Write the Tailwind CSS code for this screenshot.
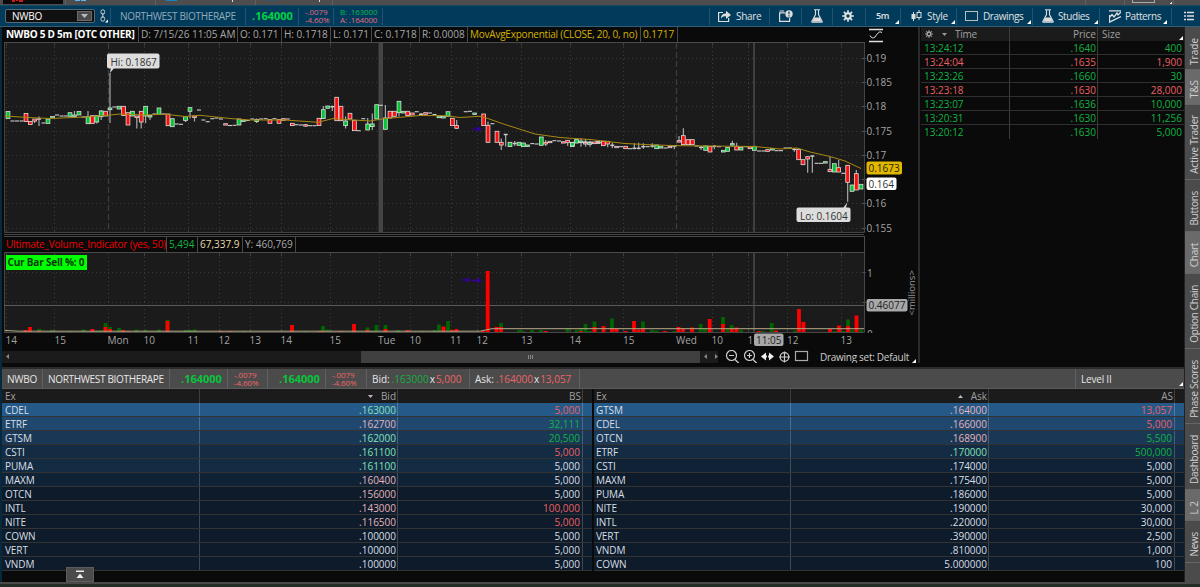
<!DOCTYPE html>
<html lang="en">
<head>
    <meta charset="UTF-8">
    <meta name="viewport" content="width=device-width, initial-scale=1.0">
    <title>NWBO Chart</title>
    <script src="https://cdn.jsdelivr.net/npm/@tailwindcss/browser@4"></script>
</head>
<body class="bg-[#0a0a0a]">
<div class="w-[1200px] h-[587px] flex flex-col overflow-hidden bg-[#0a0a0a] font-['Open_Sans',sans-serif] text-[10px] leading-[14px] whitespace-nowrap text-[#a8a8a8]">

    <!-- Tab strip, cut off at the top -->
    <svg class="block h-[6px] w-[1200px] shrink-0" viewBox="0 0 1200 6" shape-rendering="crispEdges">
        <rect width="1200" height="6" fill="#4d4d4d"/>
        <rect x="3" width="60" height="4" fill="#0a0a0a"/>
        <path d="M12 0h3v2h-3zM16 0h2v1h-2zM19 0h4v2h-4z" fill="#d81818"/>
        <path d="M75 0h5v1h-5zM81 0h5v1h-5z" fill="#58b8ee"/>
        <rect x="166" width="11" height="1" fill="#1687c4"/>
        <path d="M267 0h4v1h-4zM272 0h3v1h-3z" fill="#2d5a70"/>
        <path d="M232 0h1v2h-1zM319 0h1v2h-1z" fill="#ddd"/>
        <path d="M65 0h1v5h-1zM155 0h1v5h-1zM255 0h1v5h-1zM332 0h1v5h-1zM1085 0h1v6h-1zM1124 0h1v6h-1zM1173 0h1v6h-1z" fill="#606060"/>
        <path d="M1132 0v2.500h22V0" fill="none" stroke="#aaa"/>
        <path d="M1172 1v3h-3z" fill="#ddd"/>
        <rect y="5" width="1200" height="1" fill="#174a66"/>
    </svg>

    <!-- Toolbar -->
    <div class="flex h-[21px] shrink-0 items-center bg-[#003b5c] border-b border-[#345e75] text-[#e0e0e0]">
        <div class="flex items-center justify-between ml-[5px] w-[90px] h-[14px] pl-[6px] pr-[2px] bg-[#101010] border border-[#566a75] rounded-[2px] text-[10px] leading-3 text-white">
            <span class="tracking-[-0.2px]">NWBO</span>
            <span class="flex items-center justify-center w-[15px] h-[10px] bg-[#4a4a4a] border border-[#6a6a6a]"><svg class="w-[7px] h-1" viewBox="0 0 7 4"><path d="M0 0h7L3.500 4z" fill="#bbb"/></svg></span>
        </div>
        <svg class="w-[10px] h-[14px] ml-[4px]" viewBox="0 0 10 14" fill="none" stroke="#ccc"><rect x="2" y=".8" width="3.600" height="4.400" rx="1.600"/><rect x="2" y="7.800" width="3.600" height="4.400" rx="1.600"/><path d="M3.800 4v5"/><path d="M9 10.500v3H6z" fill="#fff" stroke="none"/></svg>
        <div class="flex items-center w-[135px] h-[17px] ml-[1px] pl-[9px] border-l border-[#22546f] tracking-[-0.33px] text-[#93a9b6]"><span>NORTHWEST BIOTHERAPE</span></div>
        <div class="flex items-center w-[53px] h-[17px] pl-[6px] border-l border-[#22546f] font-bold text-[11px] text-[#00d244]">.164000</div>
        <div class="flex flex-col justify-center w-[35px] h-[17px] pl-[6px] border-l border-[#22546f] text-[8px] leading-[8px] tracking-[-0.1px] text-[#e8687a]"><span>-.0079</span><span>-4.60%</span></div>
        <div class="flex flex-col justify-center w-[49px] h-[17px] pl-[6px] border-l border-[#22546f] text-[8px] leading-[8px] tracking-[-0.15px]"><span class="text-[#10b850]">B: .163000</span><span class="text-[#e8687a]">A: .164000</span></div>
        <div class="w-[327px] h-[17px] border-l border-[#22546f]"></div>
        <div class="flex items-center w-[60px] h-[17px] pl-[8px] gap-[5px] border-l border-[#22546f]">
            <svg class="w-[13px] h-[12px]" viewBox="0 0 13 12"><path d="M5 2.500H.6v9h10V8" fill="none" stroke="#ddd" stroke-width="1.200"/><path d="M3 8.500C3 4.500 5.500 3.500 8 3.500V.8L13 5 8 9V6.300C6 6.300 4.500 6.500 3 8.500z" fill="#ddd"/></svg><span class="tracking-[-0.3px]">Share</span>
        </div>
        <div class="flex items-center w-[32px] h-[17px] pl-[9px] border-l border-[#22546f]">
            <svg class="w-[14px] h-[12px]" viewBox="0 0 14 12"><path d="M6 2.800H.6v8.500h10V8M.6 1h4.500" fill="none" stroke="#ddd" stroke-width="1.200"/><circle cx="10" cy="3.900" r="3.700" fill="#ddd"/><path d="M10 1.500v2.800M10 5.300v1.200" stroke="#003b5c" stroke-width="1.200"/></svg>
        </div>
        <div class="flex items-center w-[31px] h-[17px] pl-[9px] border-l border-[#22546f]">
            <svg class="w-[12px] h-[14px]" viewBox="0 0 12 14"><path d="M3 .7h6M4.500 1v4.500L.8 12.500q-.2.800.6.800h9.200q.8 0 .6-.8L7.500 5.500V1" fill="none" stroke="#ddd" stroke-width="1.100"/><path d="M3.300 8.500h5.400l2 4.200H1.300z" fill="#ddd"/></svg>
        </div>
        <div class="flex items-center w-[33px] h-[17px] pl-[9px] border-l border-[#22546f]">
            <svg class="w-[12px] h-[12px]" viewBox="-6 -6 12 12" fill="none" stroke="#e6e6e6"><circle r="2.700" stroke-width="2"/><path d="M0-5.800V-3M0 3v2.800M-5.800 0H-3M3 0h2.800M-4.100-4.100l2 2M2.100 2.100l2 2M-4.100 4.100l2-2M2.100-2.100l2-2" stroke-width="1.600"/></svg>
        </div>
        <div class="flex items-center w-[35px] h-[17px] pl-[10px] text-[9px] font-semibold tracking-[-0.3px] border-l border-[#22546f]"><span class="w-[19px]">5m</span><svg class="w-[4px] h-[4px] mt-[11px]" viewBox="0 0 4 4"><path d="M4 0v4H0z" fill="#fff"/></svg></div>
        <div class="flex items-center w-[56px] h-[17px] pl-[10px] border-l border-[#22546f]">
            <svg class="w-[11px] h-[12px] mr-[5px]" viewBox="0 0 11 12"><path d="M2.500 2v9M8 0v10" stroke="#ddd"/><rect x=".5" y="4" width="4" height="5" fill="#ddd"/><rect x="6" y="2.500" width="4" height="5" fill="#003b5c" stroke="#ddd"/></svg>
            <span class="w-[24px] tracking-[-0.3px]">Style</span><svg class="w-[4px] h-[4px] mt-[11px]" viewBox="0 0 4 4"><path d="M4 0v4H0z" fill="#fff"/></svg>
        </div>
        <div class="flex items-center w-[76px] h-[17px] pl-[8px] border-l border-[#22546f]">
            <svg class="w-[13px] h-[11px] mr-[5px]" viewBox="0 0 13 11"><rect x=".5" y=".5" width="12" height="9" fill="none" stroke="#bbb"/></svg>
            <span class="w-[44px] tracking-[-0.4px]">Drawings</span><svg class="w-[4px] h-[4px] mt-[11px]" viewBox="0 0 4 4"><path d="M4 0v4H0z" fill="#fff"/></svg>
        </div>
        <div class="flex items-center w-[67px] h-[17px] pl-[9px] border-l border-[#22546f]">
            <svg class="w-[12px] h-[14px] mr-[4px]" viewBox="0 0 12 14"><path d="M3 .7h6M4.500 1v4.500L.8 12.500q-.2.800.6.800h9.200q.8 0 .6-.8L7.500 5.500V1" fill="none" stroke="#ddd" stroke-width="1.100"/><path d="M3.300 8.500h5.400l2 4.200H1.300z" fill="#ddd"/></svg>
            <span class="w-[36px] tracking-[-0.4px]">Studies</span><svg class="w-[4px] h-[4px] mt-[11px]" viewBox="0 0 4 4"><path d="M4 0v4H0z" fill="#fff"/></svg>
        </div>
        <div class="flex items-center w-[72px] h-[17px] pl-[9px] border-l border-[#22546f]">
            <svg class="w-[12px] h-[13px] mr-[4px]" viewBox="0 0 12 13" fill="none" stroke="#ddd"><path d="M0 .8h12M0 12.300L12 6.500M0 8l3-3.500L5 7l3-4 1 2 3-3M.5 5v8" stroke-width="1.300"/></svg>
            <span class="w-[38px] tracking-[-0.4px]">Patterns</span><svg class="w-[4px] h-[4px] mt-[11px]" viewBox="0 0 4 4"><path d="M4 0v4H0z" fill="#fff"/></svg>
        </div>
        <div class="flex items-center w-[29px] h-[17px] pl-[12px] border-l border-[#22546f]">
            <svg class="w-[11px] h-[10px]" viewBox="0 0 11 10" stroke="#ddd"><path d="M0 1.500h2M3 1.500h7M0 5h2M3 5h7M0 8.500h2M3 8.500h7" stroke-width="1.400"/></svg>
        </div>
    </div>

    <div class="flex h-[555px] shrink-0">
        <div class="w-[2px] bg-[#06293c]"></div>
        <div class="flex flex-col w-[1182px]">
            <div class="flex h-[336px]">

                <!-- Chart column -->
                <div class="flex flex-col w-[916px]">
                    <div class="flex h-[16px]">
                        <div class="flex w-[861px] ml-[2px] border-b border-[#4a4a4a] leading-[15px]">
                            <div class="w-[135px] pl-[2px] border-r border-[#4a4a4a] font-bold tracking-[-0.26px] text-white">NWBO 5 D 5m [OTC OTHER]</div>
                            <div class="w-[99px] pl-[2px] border-r border-[#4a4a4a]">D: 7/15/26 11:05 AM</div>
                            <div class="w-[44px] pl-[2px] border-r border-[#4a4a4a]">O: 0.171</div>
                            <div class="w-[49px] pl-[2px] border-r border-[#4a4a4a]">H: 0.1718</div>
                            <div class="w-[41px] pl-[2px] border-r border-[#4a4a4a]">L: 0.171</div>
                            <div class="w-[48px] pl-[2px] border-r border-[#4a4a4a]">C: 0.1718</div>
                            <div class="w-[48px] pl-[2px] border-r border-[#4a4a4a]">R: 0.0008</div>
                            <div class="w-[173px] pl-[2px] border-r border-[#4a4a4a] tracking-[-0.23px] text-[#d4b200]">MovAvgExponential (CLOSE, 20, 0, no)</div>
                            <div class="w-[37px] pl-[2px] border-r border-[#4a4a4a] text-[#d4b200]">0.1717</div>
                        </div>
                        <svg class="w-[16px] h-[16px] ml-[3px]" viewBox="0 0 16 16" fill="none" stroke="#e0e0e0"><path d="M1 2.500h14M1 14.500h14" stroke-width="1.500"/><path d="M2 8.500q2 4 5 1.500l2.500-3.500q2.500-3 4.500-1"/></svg>
                    </div>
                    <svg id="price" class="block w-[916px] h-[193px] shrink-0" viewBox="2 43 916 193" font-size="10">
                        <rect x="4" y="43" width="860" height="189" fill="#1b1b1b"/>
                    </svg>
                    <div class="flex h-[17px]">
                        <div class="flex w-[861px] ml-[2px] border-y border-r border-[#4a4a4a] leading-[15px]">
                            <div class="w-[163px] pl-[2px] border-r border-[#4a4a4a] tracking-[-0.18px] text-[#ee0000]">Ultimate_Volume_Indicator (yes, 50)</div>
                            <div class="w-[31px] pl-[2px] border-r border-[#4a4a4a] text-[#12b444]">5,494</div>
                            <div class="w-[45px] pl-[2px] border-r border-[#4a4a4a] text-[#e8dcac]">67,337.9</div>
                            <div class="w-[53px] pl-[2px] border-r border-[#4a4a4a]">Y: 460,769</div>
                        </div>
                    </div>
                    <svg id="volume" class="block w-[916px] h-[97px] shrink-0" viewBox="2 253 916 97" font-size="10">
                        <rect x="4" y="253" width="860" height="79" fill="#1b1b1b"/>
                    </svg>
                    <div class="flex items-center h-[13px] w-[916px]">
                        <div class="flex items-center w-[716px] h-[12px] pl-[4px] bg-[#1b1b1b]">
                            <svg class="w-[3px] h-[5px] mr-[352px]" viewBox="0 0 3 5"><path d="M3 0v5L0 2.500z" fill="#888"/></svg>
                            <div class="flex items-center justify-center gap-px w-[340px] h-[12px] bg-[#404040]"><i class="w-px h-1 bg-[#888]"></i><i class="w-px h-1 bg-[#888]"></i><i class="w-px h-1 bg-[#888]"></i></div>
                            <svg class="w-[14px] h-[5px] ml-[4px]" viewBox="0 0 14 5"><path d="M3 0v5L0 2.500zM11 0v5l3-2.500z" fill="#888"/></svg>
                        </div>
                        <svg class="w-[84px] h-[14px] ml-[7px] shrink-0" viewBox="725 349 84 14" fill="none" stroke="#ccc" stroke-width="1.200"><circle cx="731.500" cy="354.500" r="5"/><path d="M729 354.500h5M735 358.500l4 4"/><circle cx="749.500" cy="354.500" r="5"/><path d="M747 354.500h5M749.500 352v5M753 358.500l4 4"/><path d="M761 355.500l5-4v3h3v-3l5 4-5 4v-3h-3v3z" fill="#eee" stroke="none"/><path d="M767.500 351v9" stroke="#0a0a0a"/><circle cx="784.500" cy="356" r="4.300"/><path d="M779 356h11M784.500 350.500v11"/><rect x="795.500" y="350.500" width="12" height="9" stroke="#aaa"/></svg>
                        <span class="ml-[11px] tracking-[-0.28px] text-[#ccc]">Drawing set: Default</span><svg class="w-[4px] h-[4px] ml-[3px] mt-[9px]" viewBox="0 0 4 4"><path d="M4 0v4H0z" fill="#fff"/></svg>
                    </div>
                </div>

                <!-- Time & sales -->
                <div class="w-[266px] border-l-2 border-[#2b2b2b] pl-px">
                    <div class="flex h-[14px] bg-[#1b1b1b] text-[#a0a0a0]">
                        <div class="flex items-center w-[89px] pl-[4px] border-r border-[#3c3c3c]">
                            <svg class="w-[8px] h-[8px]" viewBox="-6 -6 12 12" fill="none" stroke="#aaa"><circle r="2.700" stroke-width="1.800"/><path d="M0-5.800V-3M0 3v2.800M-5.800 0H-3M3 0h2.800M-4.100-4.100l2 2M2.100 2.100l2 2M-4.100 4.100l2-2M2.100-2.100l2-2" stroke-width="1.600"/></svg>
                            <svg class="w-[5px] h-[3px] ml-[9px] mr-[8px]" viewBox="0 0 5 3"><path d="M0 0h5L2.500 3z" fill="#999"/></svg><span class="tracking-[-0.3px]">Time</span>
                        </div>
                        <div class="w-[88px] pr-px text-right border-r border-[#3c3c3c]">Price</div>
                        <div class="flex flex-1 justify-between pl-[4px]">Size<svg class="w-[4px] h-[4px] mt-[9px] mr-px" viewBox="0 0 4 4"><path d="M4 0v4H0z" fill="#fff"/></svg></div>
                    </div>
                    <div id="sales"></div>
                </div>
            </div>
            <div class="h-[6px] bg-[#0a0a0a] border-b-2 border-[#2b2b2b]"></div>

            <!-- Quote bar -->
            <div class="flex h-[20px] items-center bg-[#4b4b4b] border-b border-[#5a5a5a] text-[#e6e6e6]">
                <div class="flex items-center w-[41px] h-[20px] pl-[5px] border-r border-[#606060] tracking-[-0.2px]">NWBO</div>
                <div class="flex items-center w-[127px] h-[20px] pl-[5px] border-r border-[#606060] tracking-[-0.33px]">NORTHWEST BIOTHERAPE</div>
                <div class="flex items-center w-[58px] h-[20px] pl-[11px] border-r border-[#606060] font-bold text-[11px] text-[#08c43c]">.164000</div>
                <div class="flex flex-col justify-center w-[40px] h-[20px] pl-[6px] border-r border-[#606060] text-[8px] leading-[8px] tracking-[-0.1px] text-[#ec6468]"><span>-.0079</span><span>-4.60%</span></div>
                <div class="flex items-center w-[58px] h-[20px] pl-[11px] border-r border-[#606060] font-bold text-[11px] text-[#08c43c]">.164000</div>
                <div class="flex flex-col justify-center w-[41px] h-[20px] pl-[6px] border-r border-[#606060] text-[8px] leading-[8px] tracking-[-0.1px] text-[#ec6468]"><span>-.0079</span><span>-4.60%</span></div>
                <div class="flex items-center gap-px w-[103px] h-[20px] pl-[5px] border-r border-[#606060]">Bid:<span class="ml-px text-[#12b040]">.163000</span>x<span class="text-[#ec6468]">5,000</span></div>
                <div class="flex items-center gap-px w-[110px] h-[20px] pl-[5px] border-r border-[#606060]">Ask:<span class="ml-px text-[#ec6468]">.164000</span>x<span class="text-[#ec6468]">13,057</span></div>
                <div class="w-[496px] h-[20px] border-r border-[#606060]"></div>
                <div class="flex flex-1 justify-between items-center h-[20px] pl-[5px] tracking-[-0.2px]">Level II<svg class="w-[4px] h-[4px] mt-[11px] mr-px" viewBox="0 0 4 4"><path d="M4 0v4H0z" fill="#fff"/></svg></div>
            </div>

            <!-- Level II book -->
            <div class="flex">
                <div class="w-[590px]">
                    <div class="flex h-[14px] bg-[#1b1b1b] text-[#a0a0a0]">
                        <div class="w-[198px] pl-[3px] border-r border-[#3c3c3c]">Ex</div>
                        <div class="flex items-center justify-end w-[198px] pr-px border-r border-[#3c3c3c]"><svg class="w-[5px] h-[3px] mr-[8px]" viewBox="0 0 5 3"><path d="M0 0h5L2.500 3z" fill="#bbb"/></svg>Bid</div>
                        <div class="w-[185px] pr-px text-right border-r border-[#3c3c3c]">BS</div>
                    </div>
                    <div id="bids"></div>
                </div>
                <div class="w-[592px] border-l-2 border-[#0a0a0a]">
                    <div class="flex h-[14px] bg-[#1b1b1b] text-[#a0a0a0]">
                        <div class="w-[197px] pl-[2px] border-r border-[#3c3c3c]">Ex</div>
                        <div class="flex items-center justify-end w-[198px] pr-px border-r border-[#3c3c3c]"><svg class="w-[5px] h-[3px] mr-[8px]" viewBox="0 0 5 3"><path d="M0 3h5L2.500 0z" fill="#bbb"/></svg>Ask</div>
                        <div class="w-[186px] pr-px text-right border-r border-[#3c3c3c]">AS</div>
                    </div>
                    <div id="asks"></div>
                </div>
            </div>
            <div class="flex items-end flex-1 pl-[64px]">
                <div class="flex items-center justify-center w-[28px] h-[15px] -mt-1 bg-[#4b4b4b] border border-[#5c5c5c] z-10"><svg class="w-[8px] h-[9px]" viewBox="0 0 8 9"><path d="M0 .5h8v1.500H0zM4 3.500L7.500 8h-7z" fill="#eee"/></svg></div>
            </div>
        </div>

        <!-- Gadget tabs -->
        <div class="flex flex-col w-[16px] border-l border-[#222] bg-[#4b4b4b] text-[#d0d0d0]">
            <div class="flex items-center justify-center h-[43px] border-b border-[#666] pt-[6px] pl-[2px]"><span class="[writing-mode:vertical-rl] rotate-180">Trade</span></div>
            <div class="flex items-center justify-center h-[35px] border-b border-[#666] pt-[5px] pl-[2px] bg-[#6a6a6a]"><span class="[writing-mode:vertical-rl] rotate-180">T&amp;S</span></div>
            <div class="flex items-center justify-center h-[75px] border-b border-[#666] pt-[5px] pl-[2px]"><span class="[writing-mode:vertical-rl] rotate-180 tracking-[-0.2px]">Active Trader</span></div>
            <div class="flex items-center justify-center h-[52px] border-b border-[#666] pt-[5px] pl-[2px]"><span class="[writing-mode:vertical-rl] rotate-180 tracking-[-0.3px]">Buttons</span></div>
            <div class="flex items-center justify-center h-[42px] border-b border-[#666] pt-[5px] pl-[2px] bg-[#6a6a6a]"><span class="[writing-mode:vertical-rl] rotate-180 tracking-[-0.3px]">Chart</span></div>
            <div class="flex items-center justify-center h-[75px] border-b border-[#666] pt-[5px] pl-[2px]"><span class="[writing-mode:vertical-rl] rotate-180 tracking-[-0.3px]">Option Chain</span></div>
            <div class="flex items-center justify-center h-[75px] border-b border-[#666] pt-[5px] pl-[2px]"><span class="[writing-mode:vertical-rl] rotate-180 tracking-[-0.3px]">Phase Scores</span></div>
            <div class="flex items-center justify-center h-[66px] border-b border-[#666] pt-[5px] pl-[2px]"><span class="[writing-mode:vertical-rl] rotate-180 tracking-[-0.3px]">Dashboard</span></div>
            <div class="flex items-center justify-center h-[31px] border-b border-[#666] pt-[5px] pl-[2px] bg-[#6a6a6a]"><span class="[writing-mode:vertical-rl] rotate-180">L 2</span></div>
            <div class="flex items-center justify-center h-[42px] border-b border-[#666] pt-[5px] pl-[2px]"><span class="[writing-mode:vertical-rl] rotate-180 tracking-[-0.3px]">News</span></div>
        </div>
    </div>
    <div class="flex-1 bg-[#252b25] border-t-2 border-[#4a4a4a]"></div>
</div>

<script>
    // Time & sales and order book rows
    const green = "text-[#12b444]", red = "text-[#ec6064]", white = "text-[#d8dee4]";
    const mint = "text-[#86e0b8]", pink = "text-[#e4b4ba]";

    const sales = [
        ["13:24:12", ".1640", "400", green], ["13:24:04", ".1635", "1,900", red],
        ["13:23:26", ".1660", "30", green], ["13:23:18", ".1630", "28,000", red],
        ["13:23:07", ".1636", "10,000", green], ["13:20:31", ".1630", "11,256", green],
        ["13:20:12", ".1630", "5,000", green]
    ];
    document.getElementById("sales").innerHTML = sales.map(([t, p, s, c], i) => `
        <div class="flex h-[14px] leading-[15px] ${i < 6 ? "border-b border-[#303030]" : ""} ${c}">
            <div class="w-[89px] pl-[3px] border-r border-[#3c3c3c]">${t}</div>
            <div class="w-[88px] pr-px text-right border-r border-[#3c3c3c]">${p}</div>
            <div class="flex-1 pr-[2px] text-right">${s}</div>
        </div>`).join("");

    const levels = ["bg-[#255a88]", "bg-[#20486f]", "bg-[#1a3855]", "bg-[#132b43]", "bg-[#102236]"];
    const book = (id, rows, first) => {
        document.getElementById(id).innerHTML = rows.map(([ex, price, size, pc, sc, lv]) => `
            <div class="flex h-[14px] leading-[14px] border-b border-[#333] ${levels[lv] || "bg-[#0d1b2a]"} ${white}">
                <div class="${first} border-r border-white/20 tracking-[-0.1px]">${ex}</div>
                <div class="w-[198px] pr-px text-right border-r border-white/20 ${pc}">${price}</div>
                <div class="${id === "bids" ? "w-[185px]" : "w-[186px]"} pr-[2px] text-right border-r border-white/20 ${sc}">${size}</div>
            </div>`).join("");
    };
    book("bids", [
        ["CDEL", ".163000", "5,000", mint, red, 0], ["ETRF", ".162700", "32,111", pink, green, 1],
        ["GTSM", ".162000", "20,500", mint, green, 2], ["CSTI", ".161100", "5,000", mint, red, 3],
        ["PUMA", ".161100", "5,000", mint, white, 3], ["MAXM", ".160400", "5,000", pink, white, 4],
        ["OTCN", ".156000", "5,000", pink, white, 5], ["INTL", ".143000", "100,000", pink, red, 5],
        ["NITE", ".116500", "5,000", pink, red, 5], ["COWN", ".100000", "5,000", white, white, 5],
        ["VERT", ".100000", "5,000", white, white, 5], ["VNDM", ".100000", "5,000", white, white, 5]
    ], "w-[198px] pl-[3px]");
    book("asks", [
        ["GTSM", ".164000", "13,057", pink, red, 0], ["CDEL", ".166000", "5,000", pink, red, 1],
        ["OTCN", ".168900", "5,500", pink, green, 2], ["ETRF", ".170000", "500,000", mint, green, 3],
        ["CSTI", ".174000", "5,000", white, white, 4], ["MAXM", ".175400", "5,000", white, white, 5],
        ["PUMA", ".186000", "5,000", white, white, 5], ["NITE", ".190000", "30,000", white, white, 5],
        ["INTL", ".220000", "30,000", white, white, 5], ["VERT", ".390000", "2,500", white, white, 5],
        ["VNDM", ".810000", "1,000", white, white, 5], ["COWN", "5.000000", "100", white, white, 5]
    ], "w-[197px] pl-[2px]");

    // Shared time grid
    const xs = [6, 54.5, 144, 188, 219, 250, 281, 330, 410, 451, 477, 521, 570, 623, 712, 748, 787, 841];
    const vline = (x, a, b, extra) => `<path d="M${Math.floor(x) + .5} ${a}V${b}" stroke="#3d3d3d" ${extra}/>`;
    const grid = (a, b) => xs.map(x => vline(x, a, b, 'stroke-dasharray="1 3"') + vline(x, a, a + 3, "") + vline(x, b - 2, b, "")).join("");

    // Price pane. Candles: [x, bodyTop, bodyBottom, color, wickTop, wickBottom]; a single y is a doji
    const candles = [
        [8,111.5,118.5,"g"],[12.500,121],[17,121],[21.500,121],[26,113.500,121.500,"r"],[30.300,121.500,124.500,"r"],[34.700,119,121,"r",119,123],[39,119,119,"w",116.500,126],[43.500,123],[48,119,123.500,"g"],[52.500,116.500,118,"g"],[57,115],[61.500,116],[65.700,116],
        [70,112.700,116.300,"g"],[74.500,115,116,"g",111,116],[79,111.500,115,"g"],[83.500,117],[88,116.500,123.700,"g",111,124],[92.400,115.700,123.500,"r"],[96.800,115.700,122,"g",115,123.500],[101.200,111,116.700,"g",110,120],[105.600,111.300,116,"r"],[110,108,109.700,"g",73,123],[114.500,107],
        [119,106.300,109,"g"],[123.500,106.300,115.500,"r"],[128,112.700,125,"r"],[132.400,111.300,116,"g"],[136.800,116,117,"r",116,128.500],[141.200,111.300,122,"r",111,128.500],[145.600,106.300,116,"g",106,123],[150,115.500,117,"g",115,120],[154.500,114],[159,108,114.300,"g"],[163.500,114],[168,114,125.700,"r"],[172.300,118.700,126.700,"g"],[176.700,124],[181,124.300],[185.500,116.700,120.500,"g",116,122],[190,107.700,111.300,"g",107,118.500],[194.500,116,117.500,"r",116,121.500],[199,110],[203.400,120],[207.800,121.700],[212.300,118.700],[216.600,118],[221,119],[225.600,123.700,125,"r"],[230,125.500],[234.500,125.300],[239,119,125,"g"],[243.400,120,121.500,"g"],[247.700,120.500],[252.300,119],[256.700,119.500,121.500,"g",118.500,123],[261,119],[265.600,118.700],[270,119.500,123.300,"r"],[274.500,118.700],[279,119.500,123.300,"r"],[283.400,118.700,120.300,"r"],[287.800,119],[292.300,123.300,125.600,"r"],[296.600,124.700],[301,125],[305.600,124.700,125.700,"r",124,127],[310,125.700],[314.400,125.700],
        [319,118.300,125.600,"r"],[323.300,109.700,118.600,"g",106,119],[327.700,106,108.300,"g"],[332.300,106.700,106.700,"w",105.500,111],[336.700,97.300,120.700,"r"],[341,106.300,120.700,"r"],[345.600,121,125.600,"g",116.500,128.500],[350,113.300,119,"r"],[354.400,120.300,130.600,"r"],[358.700,130.700],[363.300,118.700],[367.700,124,130,"g",118,130],[372.300,124,126.600,"g",113.500,130],[376.700,104.700,119,"g"],[381,105.300],[385.400,118,129.300,"g",105,129.500],[390,111.300,118,"r"],[394.400,111.300,116.300,"r"],[399,101.300,112.700,"g",101,116.500],[403.400,111.300,113,"g"],[407.700,111.300,115.600,"r"],[412.300,113,115,"r"],[416.700,111.700],[421,114.300,114.300,"w",113,116],[425.600,112.700,114.300,"r"],[430,113],[434.500,114.500],[439,116,117.700,"g"],[443.400,116.300,118,"g"],[448,111.700,116.300,"g"],[452.400,118.300,125.600,"r"],[456.700,125.600,128.300,"r",120,129],[465.700,111.700],[470,111.300],[474.700,113,114.300,"g"],
        [483.700,114,125.600,"r"],[488,125.300,142.300,"r",121.500,142.500],[492.400,123.700],[497,131.300,142.300,"r"],[501.300,142.300,145,"r",138.500,150],[505.700,134.500,134.500,"w",134.500,146.500],[510,142.300,146.600,"g"],[514.700,143.500,143.500,"w",141,146],[519,142.300,145.300,"g"],[523.400,143,146.600,"g"],[527.700,145,146.500,"g"],[532.300,143.600],[536.700,144],[541.300,137,145.300,"g"],[545.700,142.300,144,"r",140,146],[550,141.300,142.700,"r"],[554.400,140.700],[559,141],[563.300,141.700,143,"r"],[567.700,140.300,142.700,"r",140,146],[572.300,142.300,146.500,"g"],[576.700,140,142.700,"g"],[581,142.500],[585.400,142,144,"r",139,145],[589.700,142.500,144.500,"g"],[594,143],[598,141.500,143.500,"r"]
    ];
    // second half, measured on its own origin
    [[117,68],[37,68,78,"g"],[50,59,69,"g"],[63,63,67,"g",55,80],[77,67,67,"w",60,80],[90,67,67,"w",62,80],[103,66,71,"r"],[130,64,77,"r"],[143,64,72,"r",64,82],[157,76,76,"w",68,85],[170,79,82,"r"],[183,80],[197,79,86,"r"],[210,86],[223,85,85,"w",70,88],[236,85,85,"w",68,88],[250,80,80,"w",70,86],[263,80],[277,78,78,"w",70,83],[290,75,86,"g"],[303,80,84,"g"],[317,84],[330,79,82,"r"],[343,78,78,"w",75,88],[357,62,66,"r",48,67],[370,47,74,"r",25,75],[384,59,74,"r"],[397,59,74,"r"],[410,78],[423,82,82,"w",78,90],[437,78,91,"g"],[450,79,96,"r"],[463,79,79,"w",75,88],[477,80],[490,91,96,"g"],[503,82,94,"g"],[517,71,75,"g",62,80],[530,79,90,"r",68,90],[543,82,90,"g"],[557,80],[570,81,86,"r"],[583,79,91,"g"],[597,93],[610,93],[623,89,94,"r"],[637,86,90,"g"],[650,92],[663,92],[677,84],[690,84],[703,88,88,"w",84,95],[716,88,119,"r"],[729,119,134,"r"],[743,110,117,"r",108,158],[757,108,108,"w",108,158],[770,130],[783,130],[796,125,129,"g"],[810,148,155,"r",110,155],[823,131,156,"g"],[836,143,156,"r",120,157],[850,160],[863,136,187,"r",135,245],[876,195,214,"g"],[889,161,210,"r",150,210],[903,193,207,"g"]]
        .forEach(([x, a, b, c, t, w]) => candles.push([560 + x / 3, 120 + a / 3, b && 120 + b / 3, c, t && 120 + t / 3, w && 120 + w / 3]));

    const drawCandle = ([x, a, b, c, t, w]) => {
        let out = "";
        if (t) out += `<path d="M${x} ${t}V${w}" stroke="#aaa" stroke-width="1.200"/>`;
        if (!c || c === "w") return out + `<path d="M${x - 2} ${a}h4" stroke="#ccc" stroke-width="${c ? 1.500 : 1.100}"/>`;
        return out + `<rect x="${x - 1.900}" y="${a}" width="3.800" height="${Math.max(b - a, 1.400)}" fill="${c === "g" ? "#00c832" : "#ff0c0c"}" stroke="#dedede" stroke-width=".8"/>`;
    };
    const axis = [["0.19", 58], ["0.185", 82], ["0.18", 106], ["0.175", 131], ["0.17", 155], ["0.165", 179], ["0.16", 203], ["0.155", 228]];
    let p = grid(43, 232);
    p += axis.map(([, y]) => `<path d="M4 ${y + .5}H864" stroke="#383838" stroke-dasharray="1 3"/><path d="M862 ${y + .5}h4" stroke="#555"/>`).join("");
    p += vline(108, 43, 232, 'stroke-dasharray="6 3" stroke-width="1.300"') + vline(676.500, 43, 232, 'stroke-dasharray="6 3" stroke-width="1.300"');
    p += '<rect x="378.500" y="43" width="4.500" height="189" fill="#454545"/><rect x="753.300" y="43" width="1.500" height="189" fill="#4a4a4a"/>';
    p += candles.map(drawCandle).join("");
    p += '<path d="M5 116L28 117.500 50 118.500 85 117 110 115 120 114 145 115 165 114.200 185 116.500 200 115.300 230 118.500 250 120 285 120 318 122.300 333 118.500 350 119.800 370 121 385 118.500 400 117.300 420 115.500 445 115.700 460 117.500 480 116.300 485 117.500 505 124.500 535 134 560 137.500 590 139.500 625 143.500 655 145 680 145.700 755 146.500 780 149 797 148 810 152 830 156.500 845 161 861 168.500" fill="none" stroke="#a88910" stroke-width="1"/>';
    p += '<path d="M472 129h7" stroke="#34009c" stroke-width="1.300"/><path d="M477 126l5 3-5 3z" fill="#34009c"/>';
    p += '<path d="M4.500 43V232.500H864.500V43M4 234.500H864" fill="none" stroke="#444"/>';
    p += '<path d="M110 73l5-6h-4z" fill="#ddd"/><rect x="107" y="53.500" width="52.500" height="15" rx="2" fill="#ddd"/><text x="110.500" y="66" fill="#333">Hi: 0.1867</text>';
    p += '<path d="M847.500 202l-5 7h3z" fill="#ddd"/><rect x="796.500" y="207.500" width="54" height="14.500" rx="2" fill="#ddd"/><text x="800" y="219.500" fill="#333">Lo: 0.1604</text>';
    p += axis.filter(a => a[0] !== "0.165").map(([s, y]) => `<text x="866.500" y="${y + 4}" fill="#a4a4a4">${s}</text>`).join("");
    p += '<rect x="866.500" y="161.500" width="35.500" height="13" rx="2" fill="#e0b800"/><text x="868.500" y="172" fill="#2a2200">0.1673</text>';
    p += '<rect x="866.500" y="177.500" width="30" height="12.500" rx="2" fill="#fff"/><text x="868.500" y="187.700" fill="#333">0.164</text>';
    document.getElementById("price").innerHTML += p;

    // Volume pane. Bars: [x, top, color, redTop]; green bars may carry a red lower part
    const bars = [
        [25.500,330,"r"],[30,327,"r"],[39,329,"g",331],[52,330,"g"],[70,331,"g"],[83.500,329.500,"g"],[92.500,329,"r"],[97,331,"g"],[101,330.500,"g"],[105.500,323,"g",327],[110,327,"g",329],[119,328,"g"],[123,330,"r"],[128,331,"r"],[136.500,329.500,"g"],[145.500,330,"g"],[159,329.500,"g"],[167.500,320,"g",321],[185.500,330,"g"],[190,330,"g"],[194.500,329.500,"g"],[221,331,"r"],[230,331,"r"],[243,331,"g"],[292,325,"r"],[305,331,"g"],[319,331,"r"],[323,326,"g",331],[327.500,329.500,"g"],[341,331,"r"],[354,324,"r"],[367.500,327.500,"g",330],[372.500,331,"g"],[376.500,325,"g"],[385.500,325,"g",329],[398,330,"g"],
        [407.500,330,"r"],[421.500,331,"g"],[434.500,330,"g"],[439,324.500,"g"],[443.500,326.500,"r"],[448,321,"g"],[452,330,"r"],[456.500,329,"r"],[483,331,"r"],[487.700,271,"r"],[496.500,327,"r"],[501,323,"g",327],[519,330,"g"],[523,331,"g"],[532,330,"g"],[541,330,"g"],[545.500,331,"r"],[567.500,328,"g"],[576.500,330,"g"],[581,328,"g",331],[585.500,324,"g"],[590,331,"g"],[594.500,321.500,"g",327],[603.500,326,"r"],[612,318.500,"g",328],[616.500,328,"r"],[625.500,331,"r"],[634,321,"r"],[638.500,329.500,"r"],[643,321.500,"g",328],[652,330,"g"],[656.500,330.500,"g"],[665,331,"r"],[674.500,331,"g"],[678.500,327,"r"],[683,328.500,"r"],[692,327.500,"r"],[700.700,324,"g"],[705,328,"g"],[709.700,319,"r"],[723,317,"g",324],[727.500,329,"g"],[731.700,325,"g",329],[736.500,327.500,"r"],[741,330,"g"],[759,331,"r"],[763,331,"g"],[771.700,323,"g"],[776,330.500,"r"],[795,330.500,"g"],[799,309,"r"],[803.500,322,"r"],[830,329,"r"],[834.500,331,"g"],[839,325.500,"r"],[843.500,331,"g"],[848,319.500,"g",326],[852,330,"g"],[856.500,315.500,"r"],[861,330,"g"]
    ];
    const fill = { r: "#ff0000", g: "#006400" };
    let v = grid(253, 332) + vline(108, 253, 332, 'stroke-dasharray="1 3"') + vline(379, 253, 332, 'stroke-dasharray="1 3"') + vline(676.500, 253, 332, 'stroke-dasharray="1 3"');
    v += '<path d="M4 272.500H864M4 302.500H864" stroke="#383838" stroke-dasharray="1 3"/><path d="M4.500 253V332.500M4 332.500H864M864.500 253V332.500M862 272.500h4M862 302.500h4" stroke="#484848"/>';
    v += '<path d="M4 305.500H864" stroke="#5a5a5a"/><rect x="753.300" y="253" width="1.500" height="80" fill="#4a4a4a"/>';
    v += bars.map(([x, y, c, r]) => `<rect x="${x - 1.900}" y="${y}" width="3.800" height="${332 - y}" fill="${fill[c]}"/>` + (r ? `<rect x="${x - 1.900}" y="${r}" width="3.800" height="${332 - r}" fill="#ff0000"/>` : "")).join("");
    v += '<path d="M5 330.500L20 331.200H480L492 328.700H864" fill="none" stroke="#b4aa84"/>';
    v += '<path d="M462 280h7M472 280.500h7" stroke="#34009c" stroke-width="1.300"/><path d="M466 277.500l5 2.500-5 2.500zM477 277.500l5 3-5 3z" fill="#34009c"/>';
    v += '<rect x="6" y="255" width="81" height="15" fill="#00ff00"/><text x="7.500" y="265.500" font-weight="bold" letter-spacing="-.2" fill="#073807">Cur Bar Sell %: 0</text>';
    v += [["14", 5.5], ["15", 54.5], ["Mon", 107.5], ["10", 143.5], ["11", 187.500], ["12", 218.500], ["13", 249.500], ["14", 280.500], ["15", 329.500], ["Tue", 378], ["10", 409.500], ["11", 450], ["12", 476.500], ["13", 521], ["14", 569.500], ["15", 623], ["Wed", 676], ["10", 711.500], ["1", 747.500], ["12", 787], ["13", 840.500]]
        .map(([s, x]) => `<text x="${x}" y="344" fill="#a4a4a4">${s}</text>`).join("");
    v += '<rect x="754" y="333.500" width="29.500" height="12.500" rx="2" fill="#a8a8a8"/><text x="756" y="343.500" fill="#222">11:05</text>';
    v += '<text x="867" y="277" fill="#a4a4a4">1</text><svg x="866" y="328" width="8" height="5" viewBox="866 328 8 5"><text x="867" y="338" fill="#a4a4a4">0</text></svg>';
    v += '<rect x="866.500" y="299" width="41" height="12.500" rx="2" fill="#a8a8a8"/><text x="868.500" y="309" fill="#222">0.46077</text>';
    v += '<text transform="translate(914.500 315.500) rotate(-90)" fill="#999" font-size="9.500">&lt;millions&gt;</text>';
    document.getElementById("volume").innerHTML += v;
</script>
</body>
</html>
